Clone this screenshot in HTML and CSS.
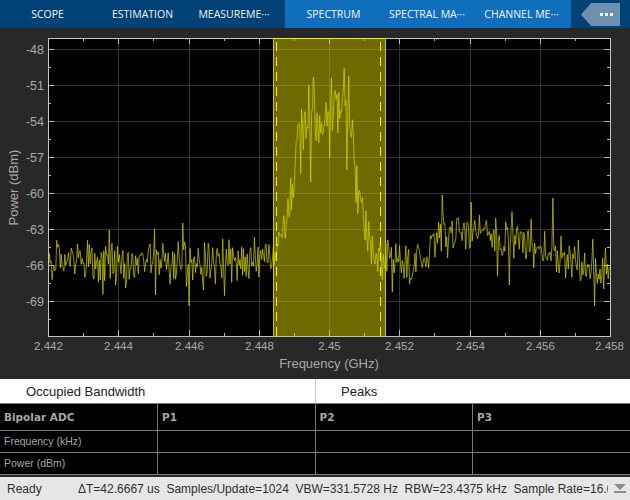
FILE: index.html
```html
<!DOCTYPE html>
<html lang="en">
<head>
<meta charset="utf-8">
<title>Spectrum Analyzer</title>
<link rel="stylesheet" href="styles.css">
</head>
<body>
<div class="app">
  <nav class="tabs">
    <div class="tab-group tab-group-dark">
      <span class="tab tab-scope">SCOPE</span>
      <span class="tab tab-est">ESTIMATION</span>
      <span class="tab tab-meas">MEASUREME···</span>
    </div>
    <div class="tab-group tab-group-blue">
      <span class="tab tab-spec">SPECTRUM</span>
      <span class="tab tab-sm">SPECTRAL MA···</span>
      <span class="tab tab-ch">CHANNEL ME···</span>
    </div>
    <div class="tab-more">
      <svg class="more-icon" width="39" height="23" viewBox="0 0 39 23">
        <path class="more-shape" d="M0 11.5 L10 0 H39 V23 H10 Z"/>
        <path class="more-dots" d="M19 10h3v3h-3zM24 10h3v3h-3zM29 10h3v3h-3z"/>
      </svg>
    </div>
  </nav>
  <main class="plot">
    <svg class="plot-svg" width="630" height="351" viewBox="0 28 630 351">
      <rect class="axes-bg" x="48.5" y="38.5" width="562" height="298"/>
      <rect class="band" x="273.5" y="38.5" width="112" height="298"/>
      <path class="grid" d="M48 49.5H610M48 85.5H610M48 121.5H610M48 157.5H610M48 193.5H610M48 229.5H610M48 265.5H610M48 301.5H610M118.5 38V336M189.5 38V336M259.5 38V336M329.5 38V336M399.5 38V336M470.5 38V336M540.5 38V336"/>
      <path class="band-grid" d="M274 49.5H385M274 85.5H385M274 121.5H385M274 157.5H385M274 193.5H385M274 229.5H385M274 265.5H385M274 301.5H385M329.5 38V336"/>
      <polyline id="trace" class="trace" points=""/>
      <path class="ticks" d="M48 49.5h6M48 85.5h6M48 121.5h6M48 157.5h6M48 193.5h6M48 229.5h6M48 265.5h6M48 301.5h6M48 67.5h3M48 103.5h3M48 139.5h3M48 175.5h3M48 211.5h3M48 247.5h3M48 283.5h3M48 319.5h3M610 49.5h-6M610 85.5h-6M610 121.5h-6M610 157.5h-6M610 193.5h-6M610 229.5h-6M610 265.5h-6M610 301.5h-6M610 67.5h-3M610 103.5h-3M610 139.5h-3M610 175.5h-3M610 211.5h-3M610 247.5h-3M610 283.5h-3M610 319.5h-3M118.5 38v6M189.5 38v6M259.5 38v6M329.5 38v6M399.5 38v6M470.5 38v6M540.5 38v6M83.5 38v3M153.5 38v3M224.5 38v3M294.5 38v3M364.5 38v3M434.5 38v3M505.5 38v3M575.5 38v3M118.5 336v-6M189.5 336v-6M259.5 336v-6M329.5 336v-6M399.5 336v-6M470.5 336v-6M540.5 336v-6M83.5 336v-3M153.5 336v-3M224.5 336v-3M294.5 336v-3M364.5 336v-3M434.5 336v-3M505.5 336v-3M575.5 336v-3"/>
      <rect class="frame" x="48.5" y="38.5" width="562" height="298"/>
      <path class="band-edge" d="M273.5 38.5V336.5M385.5 38.5V336.5"/>
      <path class="band-top" d="M273.5 38.5H385.5"/>
      <path class="band-dash" d="M276.5 42V336M380.5 42V336"/>
      <g class="ylabels">
        <text x="44" y="53.5">-48</text><text x="44" y="89.5">-51</text><text x="44" y="125.5">-54</text><text x="44" y="161.5">-57</text><text x="44" y="197.5">-60</text><text x="44" y="233.5">-63</text><text x="44" y="269.5">-66</text><text x="44" y="305.5">-69</text>
      </g>
      <g class="xlabels">
        <text x="48.5" y="350">2.442</text><text x="118.5" y="350">2.444</text><text x="189.5" y="350">2.446</text><text x="259.5" y="350">2.448</text><text x="329.5" y="350">2.45</text><text x="399.5" y="350">2.452</text><text x="470.5" y="350">2.454</text><text x="540.5" y="350">2.456</text><text x="609.5" y="350">2.458</text>
      </g>
      <text class="axis-title" x="329" y="368">Frequency (GHz)</text>
      <text class="axis-title" transform="translate(18 187.5) rotate(-90)">Power (dBm)</text>
    </svg>
  </main>
  <section class="panel">
    <div class="panel-heads">
      <div class="panel-head">Occupied Bandwidth</div>
      <div class="panel-head panel-head-right">Peaks</div>
    </div>
    <table class="results">
      <tr class="row-head"><th>Bipolar ADC</th><th>P1</th><th>P2</th><th>P3</th></tr>
      <tr class="row-a"><td>Frequency (kHz)</td><td></td><td></td><td></td></tr>
      <tr class="row-a"><td>Power (dBm)</td><td></td><td></td><td></td></tr>
    </table>
  </section>
  <footer class="status">
    <span class="status-ready">Ready</span>
    <span class="status-info">ΔT=42.6667 us&nbsp; Samples/Update=1024&nbsp; VBW=331.5728 Hz&nbsp; RBW=23.4375 kHz&nbsp; Sample Rate=16.0000 MHz</span>
    <svg class="status-arrow" width="12" height="9" viewBox="0 0 12 9"><path class="arrow-fill" d="M0 0H12L6 6Z"/><path class="arrow-fill" d="M0 7H12V9H0Z"/></svg>
  </footer>
</div>
<script src="script.js"></script>
</body>
</html>
```
FILE: styles.css
```css
* { box-sizing: border-box; }
html, body { margin: 0; padding: 0; }
body { width: 630px; height: 500px; overflow: hidden; background: #282828; }
.app { display: flex; flex-direction: column; width: 630px; height: 500px; }

.tabs { display: flex; height: 28px; flex: none; font: 10.5px "Open Sans", sans-serif; color: #f0f4f8; }
.tab-group { display: flex; align-items: center; height: 28px; }
.tab-group-dark { width: 285px; background: #004275; }
.tab-group-blue { width: 286px; background: #106fbd; }
.tab { display: block; text-align: center; white-space: nowrap; }
.tab-scope { width: 95px; }
.tab-est { width: 95px; }
.tab-meas { width: 88px; }
.tab-spec { width: 97px; }
.tab-sm { width: 90px; }
.tab-ch { width: 99px; }
.tab-more { flex: 1; background: #004275; display: flex; align-items: center; padding: 3px 0 2px 10px; }
.more-icon { display: block; }
.more-shape { fill: #6d90b0; }
.more-dots { fill: #f2f5f8; }

.plot { height: 351px; flex: none; background: #282828; }
.plot-svg { display: block; }
.axes-bg { fill: #000; }
.band { fill: #6f6a00; }
.grid { stroke: #343434; stroke-width: 1; fill: none; }
.band-grid { stroke: #837f1e; stroke-width: 1; fill: none; }
.trace { fill: none; stroke: #d8d800; stroke-width: 1; stroke-opacity: .68; stroke-linejoin: miter; }
.ticks { stroke: #b8b8b8; stroke-width: 1; fill: none; }
.frame { fill: none; stroke: #c4c4c4; stroke-width: 1; }
.band-edge { stroke: #c8c800; stroke-width: 1; fill: none; }
.band-top { stroke: #f0f000; stroke-width: 1; fill: none; }
.band-dash { stroke: #f4f400; stroke-width: 1; stroke-dasharray: 9 6; fill: none; }
.ylabels text { font: 12.5px "Liberation Sans", sans-serif; fill: #a8a8a8; text-anchor: end; }
.xlabels text { font: 11.5px "Liberation Sans", sans-serif; fill: #a8a8a8; text-anchor: middle; }
.axis-title { font: 13px "Liberation Sans", sans-serif; fill: #a8a8a8; text-anchor: middle; }

.panel { flex: none; height: 96px; background: #fff; }
.panel-heads { display: flex; height: 24px; background: #fff; }
.panel-head { width: 315px; padding: 5px 0 0 26px; font: 13px "Liberation Sans", sans-serif; color: #222; }
.panel-head-right { border-left: 1px solid #c8c8c8; padding-left: 25px; }
.results { width: 630px; height: 72px; border-collapse: collapse; table-layout: fixed; background: #000; border-top: 1px solid #808080; border-bottom: 1px solid #808080; }
.results th, .results td { border: 1px solid #7a7a7a; padding: 0 0 0 4px; text-align: left; color: #a8a8a8; }
.results th:first-child, .results td:first-child { border-left: 0; }
.results th:last-child, .results td:last-child { border-right: 0; }
.results th { font: bold 10.5px "DejaVu Sans", sans-serif; }
.results td { font: 10.5px "Liberation Sans", sans-serif; padding-bottom: 2px; }
.row-head { height: 27px; }
.row-a { height: 22px; }

.status { flex: 1; display: flex; align-items: center; margin-top: 2px; background: #e6e6e6; font: 12px "Liberation Sans", sans-serif; color: #2e2e2e; padding: 0 4px 0 7px; }
.status-ready { width: 71px; flex: none; }
.status-info { width: 530px; flex: none; overflow: hidden; white-space: nowrap; }
.status-arrow { display: block; flex: none; margin-left: 6px; }
.arrow-fill { fill: #8c8c8c; }
```
FILE: script.js
```js
(function () {
  var state = 20240611;
  function rnd() {
    state = (state + 0x6D2B79F5) | 0;
    var t = Math.imul(state ^ (state >>> 15), 1 | state);
    t = (t + Math.imul(t ^ (t >>> 7), 61 | t)) ^ t;
    return ((t ^ (t >>> 14)) >>> 0) / 4294967296;
  }
  var env = [
    [48, 262], [268, 262], [277, 250], [286, 226], [292, 190], [298, 150],
    [304, 124], [316, 114], [332, 118], [345, 110], [352, 140], [360, 195],
    [368, 238], [376, 258], [388, 263], [425, 260], [437, 238], [460, 232],
    [520, 236], [545, 250], [565, 263], [610, 264]
  ];
  var spikes = {
    109: 230, 155: 229, 183: 223, 189: 306, 126: 288, 442: 195, 471: 202, 553: 198,
    595: 306, 509: 285, 498: 276, 344: 68, 349: 76, 313: 77, 309: 85, 332: 78,
    300: 127, 291: 178, 330: 158, 347: 170, 311: 182, 360: 190
  };
  function at(x) {
    for (var i = 1; i < env.length; i++) {
      if (x <= env[i][0]) {
        var a = env[i - 1], b = env[i];
        return a[1] + (b[1] - a[1]) * (x - a[0]) / (b[0] - a[0]);
      }
    }
    return 264;
  }
  var pts = [];
  var n = 620;
  var used = {};
  for (var i = 0; i < n; i++) {
    var x = 48.5 + i * (561.5 / (n - 1));
    var base = at(x);
    var amp = (x > 296 && x < 358) ? 38 : 26;
    var y = base + (rnd() + rnd() - 1) * amp;
    if (rnd() < 0.08) y += rnd() * amp * 0.8;
    y = Math.max(y, base - 26);
    var key = Math.round(x);
    if (spikes[key] && !used[key]) { y = spikes[key]; used[key] = 1; }
    pts.push(x.toFixed(1) + "," + y.toFixed(1));
  }
  document.getElementById("trace").setAttribute("points", pts.join(" "));
})();
```
